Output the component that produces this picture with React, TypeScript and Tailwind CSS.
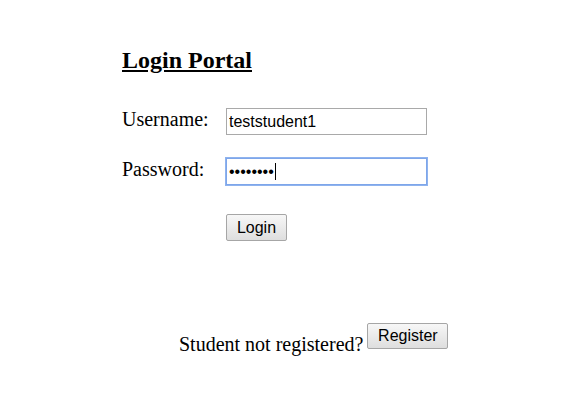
import React, { useState } from 'react';

const serif = "font-['Liberation_Serif','Times_New_Roman',serif]";
const sans = "font-['Liberation_Sans',Arial,sans-serif]";

const btnClass =
  `${sans} text-[16px] leading-none text-black bg-gradient-to-b from-[#f7f7f7] to-[#dedede] border border-[#a6a6a6] rounded-[2px] flex items-center justify-center`;

export default function App() {
  const [username, setUsername] = useState('teststudent1');
  const [password, setPassword] = useState('password');

  return (
    <div className={`min-h-[417px] w-full bg-white text-black ${serif}`}>
      <div className="flex flex-col pt-[46px] pl-[122px]">
        <h2 className="text-[24px] leading-[28px] font-bold underline mb-[34px]">Login Portal</h2>

        <form
          className="flex flex-col"
          onSubmit={(e) => e.preventDefault()}
        >
          <div className="flex items-start">
            <label htmlFor="username" className="w-[104px] text-[20px] leading-[23px]">
              Username:
            </label>
            <input
              id="username"
              type="text"
              value={username}
              onChange={(e) => setUsername(e.target.value)}
              className={`${sans} w-[201px] h-[27px] px-[2px] text-[16px] text-black border border-[#a9a9a9] outline-none`}
            />
          </div>

          <div className="flex items-start mt-[23px]">
            <label htmlFor="password" className="w-[104px] text-[20px] leading-[23px]">
              Password:
            </label>
            <div className="relative">
              <input
                id="password"
                type="password"
                value={password}
                onChange={(e) => setPassword(e.target.value)}
                className={`${sans} w-[201px] h-[27px] px-[2px] text-[16px] text-black border border-[#7ea6ea] shadow-[0_0_0_1px_#8fb3ee] outline-none caret-transparent`}
              />
              <span className="absolute left-[49px] top-[5px] w-px h-[17px] bg-black" />
            </div>
          </div>

          <div className="pl-[104px] mt-[29px]">
            <button type="submit" className={`${btnClass} w-[61px] h-[27px]`}>
              Login
            </button>
          </div>
        </form>
      </div>

      <div className="flex items-start pl-[179px] mt-[82px]">
        <span className="text-[20px] leading-[23px] mt-[10px] mr-[4px]">Student not registered?</span>
        <button type="button" className={`${btnClass} w-[81px] h-[26px]`}>
          Register
        </button>
      </div>
    </div>
  );
}
